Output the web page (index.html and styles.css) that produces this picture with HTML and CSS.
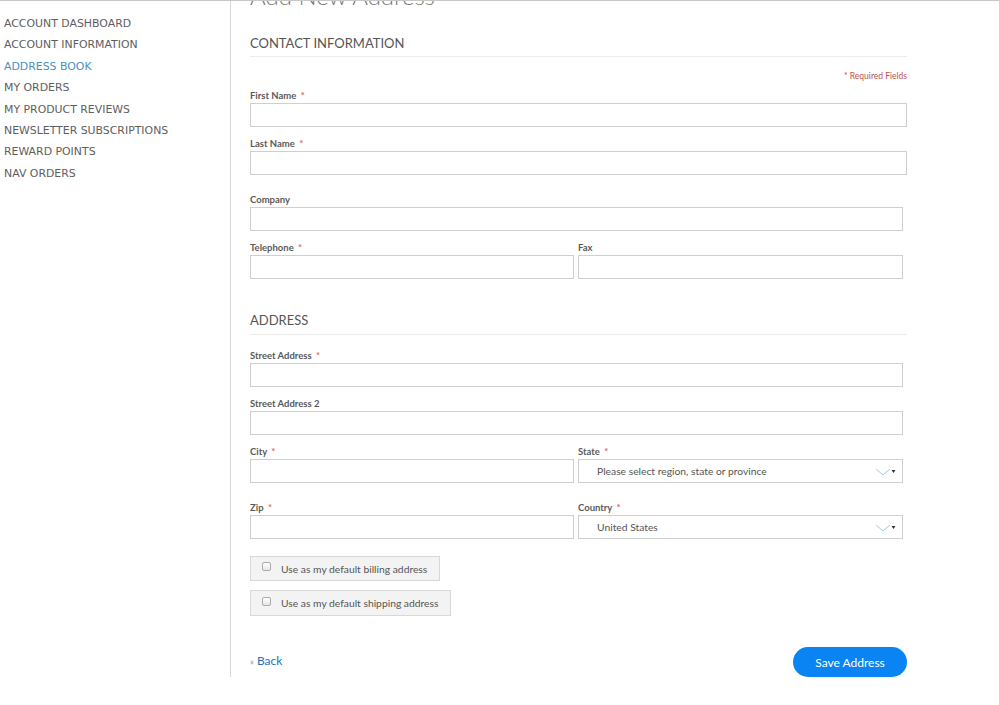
FILE: index.html
```html
<!DOCTYPE html>
<html lang="en">
<head>
<meta charset="utf-8">
<title>Add New Address</title>
<link rel="stylesheet" href="styles.css">
</head>
<body>
<div class="page">
  <aside class="sidebar">
    <ul class="nav">
      <li><a href="#">ACCOUNT DASHBOARD</a></li>
      <li><a href="#">ACCOUNT INFORMATION</a></li>
      <li class="active"><a href="#">ADDRESS BOOK</a></li>
      <li><a href="#">MY ORDERS</a></li>
      <li><a href="#">MY PRODUCT REVIEWS</a></li>
      <li><a href="#">NEWSLETTER SUBSCRIPTIONS</a></li>
      <li><a href="#">REWARD POINTS</a></li>
      <li><a href="#">NAV ORDERS</a></li>
    </ul>
  </aside>
  <main class="main">
    <h1 class="title">Add New Address</h1>
    <h2 class="section-title">CONTACT INFORMATION</h2>
    <p class="required-note">* Required Fields</p>
    <div class="field">
      <label class="label">First Name <em>*</em></label>
      <div class="input wide"></div>
    </div>
    <div class="field">
      <label class="label">Last Name <em>*</em></label>
      <div class="input wide"></div>
    </div>
    <div class="field spaced">
      <label class="label">Company</label>
      <div class="input"></div>
    </div>
    <div class="row">
      <div class="field half">
        <label class="label">Telephone <em>*</em></label>
        <div class="input"></div>
      </div>
      <div class="field half right">
        <label class="label">Fax</label>
        <div class="input"></div>
      </div>
    </div>

    <h2 class="section-title address">ADDRESS</h2>
    <div class="field first">
      <label class="label">Street Address <em>*</em></label>
      <div class="input"></div>
    </div>
    <div class="field">
      <label class="label">Street Address 2</label>
      <div class="input"></div>
    </div>
    <div class="row">
      <div class="field half">
        <label class="label">City <em>*</em></label>
        <div class="input"></div>
      </div>
      <div class="field half right">
        <label class="label">State <em>*</em></label>
        <div class="input select"><span>Please select region, state or province</span>
          <svg class="arrow" width="22" height="10" viewBox="0 0 22 10"><path d="M1 2 L8 8 L15 2" fill="none" stroke="#a9c6dd" stroke-width="1"/><path d="M16.5 3 L20.5 3 L18.5 6 Z" fill="#333"/></svg>
        </div>
      </div>
    </div>
    <div class="row spaced">
      <div class="field half">
        <label class="label">Zip <em>*</em></label>
        <div class="input"></div>
      </div>
      <div class="field half right">
        <label class="label">Country <em>*</em></label>
        <div class="input select"><span>United States</span>
          <svg class="arrow" width="22" height="10" viewBox="0 0 22 10"><path d="M1 2 L8 8 L15 2" fill="none" stroke="#a9c6dd" stroke-width="1"/><path d="M16.5 3 L20.5 3 L18.5 6 Z" fill="#333"/></svg>
        </div>
      </div>
    </div>

    <div class="checks">
      <label class="check billing"><span class="box"></span>Use as my default billing address</label>
      <label class="check shipping"><span class="box"></span>Use as my default shipping address</label>
    </div>

    <div class="actions">
      <a class="back" href="#"><small>«</small> Back</a>
      <button class="save" type="button">Save Address</button>
    </div>
  </main>
</div>
</body>
</html>
```

FILE: styles.css
```css
* { box-sizing: border-box; }
html, body { margin: 0; padding: 0; background: #fff; }
body { font-family: Lato, "Open Sans", sans-serif; color: #555; }

.page {
  display: flex;
  align-items: stretch;
  border-top: 1px solid #c8c8c8;
  width: 999px;
}

.sidebar {
  width: 231px;
  border-right: 1px solid #d8d8d8;
  flex: none;
}
.nav {
  list-style: none;
  margin: 0;
  padding: 12px 0 0 4px;
}
.nav li {
  font-family: "DejaVu Sans", Verdana, sans-serif;
  font-size: 10.9px;
  line-height: 21.4px;
}
.nav a { color: #5e5e5e; text-decoration: none; }
.nav li.active a { color: #4a92bd; }

.main {
  width: 676px;
  padding-left: 19px;
  overflow: hidden;
}

.title {
  margin: -19px 0 0;
  font-size: 24px;
  line-height: 28px;
  font-weight: 300;
  color: #777;
  height: 28px;
}

.section-title {
  margin: 24px 0 0;
  font-size: 13px;
  line-height: 18px;
  font-weight: 400;
  color: #555;
  padding-bottom: 4px;
  border-bottom: 1px solid #ececec;
}
.section-title.address {
  margin-top: 32px;
  padding-bottom: 5px;
}

.required-note {
  margin: 13px 0 0;
  text-align: right;
  font-size: 8.5px;
  line-height: 12px;
  color: #c0504d;
}

.field { margin-top: 8px; }
.field.first { margin-top: 12px; }
.required-note + .field { margin-top: 5px; }
.field.spaced, .row.spaced { margin-top: 16px; }
.row.spaced .field { margin-top: 0; }

.label {
  display: block;
  font-size: 9.5px;
  line-height: 16px;
  padding-top: 1px;
  height: 16px;
  font-weight: 700;
  color: #5a5a5a;
}
.label em {
  font-style: normal;
  color: #e06666;
  margin-left: 2px;
}

.input {
  height: 24px;
  border: 1px solid #cfcfcf;
  background: #fff;
  width: 653px;
}
.input.wide { width: 657px; }

.row {
  display: flex;
  gap: 4px;
  width: 653px;
}
.field.half { flex: 1; }
.field.half .input { width: 100%; }
.field.half:first-child { flex: 0 0 324px; }

.select {
  display: flex;
  align-items: center;
  justify-content: space-between;
  padding: 0 5px 0 18px;
  font-size: 10.3px;
  color: #555;
}
.arrow { display: block; margin-top: 1px; }

.checks {
  margin-top: 17px;
  display: flex;
  flex-direction: column;
  align-items: flex-start;
  gap: 9px;
}
.check {
  display: flex;
  align-items: center;
  white-space: nowrap;
  height: 25px;
  padding: 0 12px 0 11px;
  background: #f3f3f3;
  border: 1px solid #d8d8d8;
  font-size: 10.3px;
  color: #555;
}
.check.shipping { height: 26px; }
.box {
  width: 9px;
  height: 9px;
  border: 1px solid #aaa;
  border-radius: 2px;
  background: linear-gradient(#fff, #e6e6e6);
  margin-right: 10px;
  margin-top: -4px;
  flex: none;
}

.actions {
  margin-top: 31px;
  width: 657px;
  display: flex;
  justify-content: space-between;
  align-items: center;
}
.back {
  font-size: 12px;
  color: #2a6ebb;
  text-decoration: none;
  margin-top: -4px;
}
.back small { font-size: 9px; color: #7a9cc0; }
.save {
  width: 114px;
  height: 30px;
  border: none;
  border-radius: 15px;
  background: #0a84f2;
  color: #fff;
  font-family: Lato, "Open Sans", sans-serif;
  font-size: 12px;
  padding: 0;
  cursor: pointer;
}
```
